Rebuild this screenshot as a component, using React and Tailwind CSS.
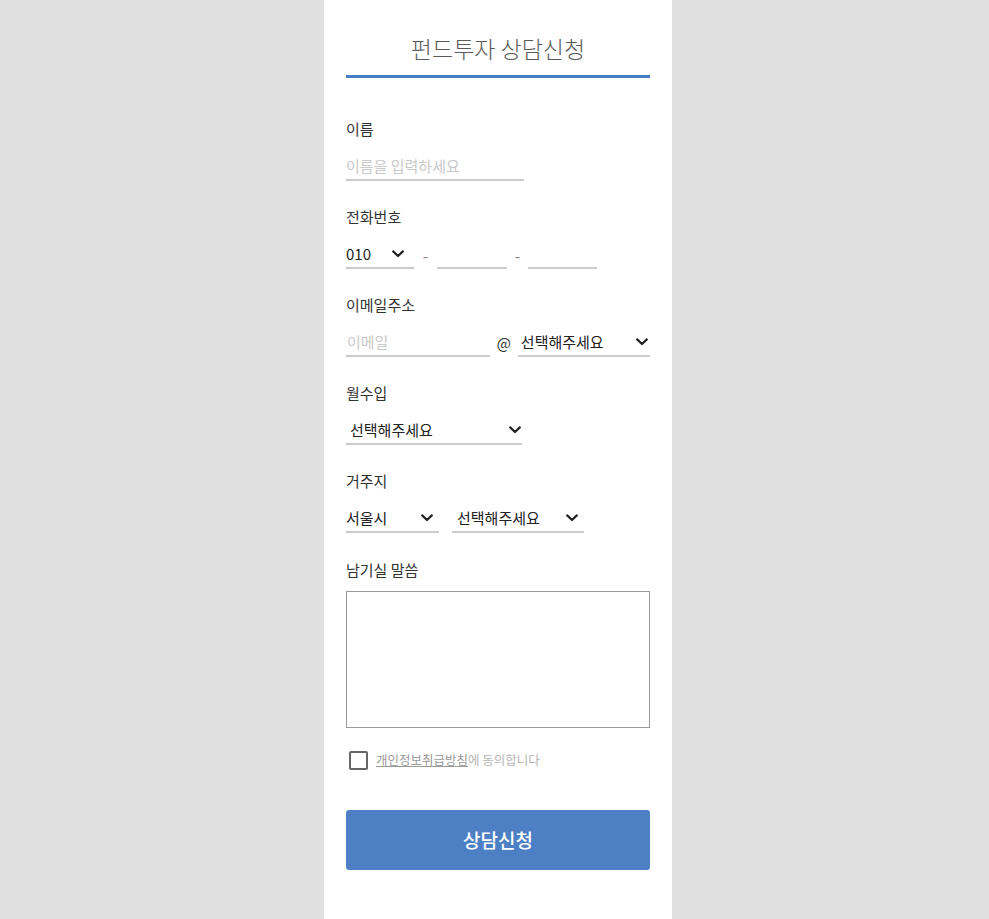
import React from "react";

const Chevron = () => (
  <svg width="12" height="8" viewBox="0 0 12 8" fill="none" className="shrink-0">
    <path d="M1.2 1.4 6 6 10.8 1.4" stroke="#222" strokeWidth="2.2" strokeLinecap="round" strokeLinejoin="round" />
  </svg>
);

const Label = ({ children }) => (
  <div className="h-[22px] text-[15px] leading-[22px] text-[#333]">{children}</div>
);

const Select = ({ value, className }) => (
  <div className={"h-[28px] flex items-center justify-between border-b-2 border-[#cbcbcb] text-[15px] text-[#222] " + className}>
    <span>{value}</span>
    <Chevron />
  </div>
);

const Line = ({ className, placeholder }) => (
  <div className={"h-[28px] flex items-center border-b-2 border-[#cbcbcb] " + className}>
    {placeholder !== undefined && (
      <input
        placeholder={placeholder}
        className="w-full bg-transparent outline-none text-[15px] text-[#222] placeholder:text-[#c9c9c9]"
      />
    )}
  </div>
);

export default function App() {
  return (
    <div className="min-h-[919px] bg-[#e0e0e0] flex justify-center pl-[7px] font-['Noto_Sans_CJK_KR','Noto_Sans',sans-serif]">
      <div className="w-[348px] min-h-[919px] bg-white px-[22px] pt-[33px]">
        <div className="h-[45px] border-b-[3px] border-[#4a7cc4] text-center text-[23px] leading-[30px] font-light text-[#5a5a5a]">
          펀드투자 상담신청
        </div>

        <div className="mt-[40px]">
          <Label>이름</Label>
          <div className="mt-[13px] flex">
            <Line className="w-[178px]" placeholder="이름을 입력하세요" />
          </div>
        </div>

        <div className="mt-[25px]">
          <Label>전화번호</Label>
          <div className="mt-[13px] flex">
            <Select value="010" className="w-[68px] pr-[10px]" />
            <div className="w-[23px] h-[28px] flex items-center justify-center text-[16px] text-[#888]">-</div>
            <Line className="w-[70px]" />
            <div className="w-[21px] h-[28px] flex items-center justify-center text-[16px] text-[#888]">-</div>
            <Line className="w-[69px]" />
          </div>
        </div>

        <div className="mt-[25px]">
          <Label>이메일주소</Label>
          <div className="mt-[13px] flex">
            <Line className="w-[145px] pl-[1px]" placeholder="이메일" />
            <div className="w-[28px] h-[28px] flex items-center justify-center text-[15px] text-[#333]">@</div>
            <Select value="선택해주세요" className="w-[133px] pl-[3px] pr-[2px]" />
          </div>
        </div>

        <div className="mt-[25px]">
          <Label>월수입</Label>
          <div className="mt-[13px] flex">
            <Select value="선택해주세요" className="w-[176px] pl-[4px] pr-[1px]" />
          </div>
        </div>

        <div className="mt-[25px]">
          <Label>거주지</Label>
          <div className="mt-[13px] flex gap-[13px]">
            <Select value="서울시" className="w-[93px] pr-[6px]" />
            <Select value="선택해주세요" className="w-[132px] pl-[5px] pr-[6px]" />
          </div>
        </div>

        <div className="mt-[26px]">
          <Label>남기실 말씀</Label>
          <textarea className="mt-[10px] block w-full h-[137px] border border-[#9a9a9a] resize-none outline-none text-[14px] p-2" />
        </div>

        <div className="mt-[22px] h-[20px] flex items-center pl-[3px]">
          <div className="w-[19px] h-[19px] border-2 border-[#666] rounded-[2px] shrink-0" />
          <div className="ml-[8px] text-[12.5px] text-[#b5b5b5] leading-[20px]">
            <span className="underline text-[#999]">개인정보취급방침</span>에 동의합니다
          </div>
        </div>

        <button className="mt-[40px] w-full h-[60px] bg-[#4d7fc4] rounded-[3px] text-white text-[19px] font-medium">
          상담신청
        </button>
      </div>
    </div>
  );
}
